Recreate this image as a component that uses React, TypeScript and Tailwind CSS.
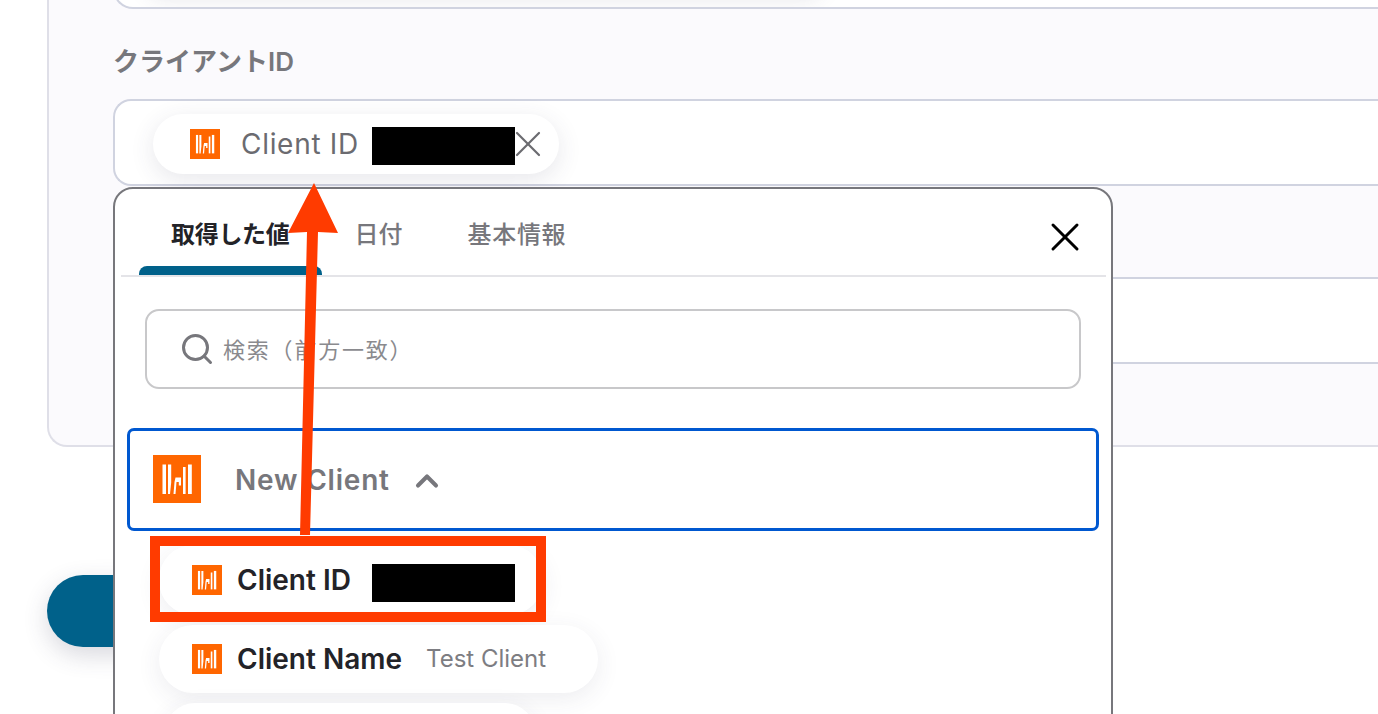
import { ChevronUp, Search, X } from "lucide-react";

function Logo({ className }: { className: string }) {
  return (
    <svg viewBox="0 0 48 48" className={className}>
      <rect width="48" height="48" fill="#ff6600" />
      <g fill="#ffffff">
        <rect x="9.5" y="9.5" width="3.5" height="29.5" />
        <path d="M15 9.5h3.2v18l-1.2 11.5h-2z" />
        <path d="M20.5 39l1-12 1-4.500h5.500v8h-2.200v-3.500h-2.300l-1 12z" />
        <rect x="30" y="12" width="2.600" height="27" />
        <rect x="35" y="9.500" width="3.800" height="29.500" />
      </g>
    </svg>
  );
}

function ValuePill({
  label,
  value,
  redacted,
  className,
}: {
  label: string;
  value?: string;
  redacted?: boolean;
  className: string;
}) {
  return (
    <div
      className={`flex items-center rounded-[34px] bg-white pl-[33px] shadow-[0_6px_24px_rgba(60,60,90,0.09)] ${className}`}
    >
      <Logo className="h-[30px] w-[30px] shrink-0" />
      <span className="ml-[15px] text-[28px] font-semibold text-[#232328]">
        {label}
      </span>
      {redacted && <div className="ml-[21px] mt-[6px] h-[38px] w-[143px] bg-black" />}
      {value && (
        <span className="ml-[24px] text-[24px] text-[#7d7d82]">{value}</span>
      )}
    </div>
  );
}

export default function App() {
  return (
    <div className="relative h-[714px] overflow-hidden bg-white font-['Inter','Noto_Sans_CJK_JP',sans-serif]">
      {/* Settings panel behind the popup */}
      <div className="-mt-[60px] ml-[47px] w-[1400px] rounded-bl-[20px] border-b-2 border-l-2 border-[#dfdfe8] bg-[#fbfafd] pb-[81px] pl-[64px]">
        <div className="flex h-[69px] items-end overflow-hidden rounded-b-[20px] border-b-2 border-l-2 border-[#d0d3e0] bg-white">
          <div className="mb-[14px] ml-[30px] h-[40px] w-[680px] rounded-full bg-white shadow-[0_6px_20px_rgba(60,60,90,0.12)]" />
        </div>
        <div className="mt-[35px] h-[36px] text-[26px] font-semibold leading-[36px] text-[#77777c]">
          クライアントID
        </div>
        <div className="mt-[19px] flex h-[87px] items-center rounded-l-[18px] border-y-2 border-l-2 border-[#d0d3e0] bg-white pl-[38px]">
          <div className="mt-[2px] flex h-[60px] w-[406px] items-center rounded-[30px] bg-white pl-[37px] shadow-[0_6px_24px_rgba(60,60,90,0.12)]">
            <Logo className="h-[30px] w-[30px] shrink-0" />
            <span className="ml-[21px] text-[28px] tracking-[0.7px] text-[#6b6b70]">
              Client ID
            </span>
            <div className="ml-[13px] mt-[5px] h-[38px] w-[143px] shrink-0 bg-black" />
            <X className="-ml-[9px] h-[44px] w-[44px] shrink-0 text-[#6b6b70]" strokeWidth={1.2} />
          </div>
        </div>
        <div className="mt-[91px] h-[87px] rounded-l-[18px] border-y-2 border-l-2 border-[#d0d3e0] bg-white" />
      </div>

      <div className="ml-[47px] mt-[128px] h-[72px] w-[200px] rounded-full bg-[#00618a] shadow-[0_8px_24px_rgba(60,60,90,0.2)]" />

      {/* Popup */}
      <div className="absolute left-[113px] top-[187px] h-[560px] w-[1000px] rounded-[20px] border-2 border-[#77777c] bg-white pl-[6px] pr-[5px]">
        <div className="relative flex h-[88px] items-start border-b-2 border-[#e4e4e8] pl-[50px] pt-[28px] text-[24px] leading-[36px]">
          <span className="font-bold tracking-[-0.3px] text-[#232328]">取得した値</span>
          <span className="ml-[65px] font-medium text-[#77777c]">日付</span>
          <span className="ml-[65px] font-medium tracking-[0.7px] text-[#77777c]">基本情報</span>
          <div className="absolute bottom-0 left-[18px] h-[9px] w-[183px] rounded-t-[8px] bg-[#00618a]" />
          <X
            className="absolute right-[17px] top-[24px] h-[48px] w-[48px] text-black"
            strokeWidth={1.5}
          />
        </div>
        <div className="ml-[24px] mt-[32px] flex h-[80px] w-[936px] items-center rounded-[14px] border-2 border-[#c8c8ca] pl-[32px]">
          <Search className="h-[36px] w-[36px] text-[#77777c]" strokeWidth={2} />
          <span className="ml-[8px] mt-[3px] text-[22px] tracking-[1.8px] text-[#8a8a8e]">
            検索（前方一致）
          </span>
        </div>
        <div className="ml-[6px] mt-[39px] flex h-[103px] w-[972px] items-center rounded-[7px] border-[3px] border-[#0058d0] pl-[23px]">
          <Logo className="-mt-[2px] h-[48px] w-[48px] shrink-0" />
          <span className="ml-[34px] text-[28px] font-semibold tracking-[0.8px] text-[#77777c]">
            New Client
          </span>
          <ChevronUp className="ml-[19px] mt-[2px] h-[36px] w-[36px] text-[#77777c]" strokeWidth={2.7} />
        </div>
        <div className="ml-[38px] mt-[14px] flex flex-col">
          <ValuePill label="Client ID" redacted className="h-[70px] w-[384px]" />
          <ValuePill
            label="Client Name"
            value="Test Client"
            className="mt-[10px] h-[68px] w-[439px]"
          />
          <div className="ml-[6px] mt-[10px] h-[60px] w-[370px] rounded-[30px] bg-white shadow-[0_6px_24px_rgba(60,60,90,0.09)]" />
        </div>
      </div>

      {/* Annotations drawn over the screenshot */}
      <div className="absolute left-[150px] top-[536px] h-[86px] w-[396px] border-[10px] border-[#ff3b00]" />
      <svg className="absolute left-0 top-0 h-[714px] w-[1378px]" viewBox="0 0 1378 714">
        <polygon
          points="314,183 338,233 318,232 310,535 300,535 307,232 288,233"
          fill="#ff3b00"
        />
      </svg>
    </div>
  );
}
